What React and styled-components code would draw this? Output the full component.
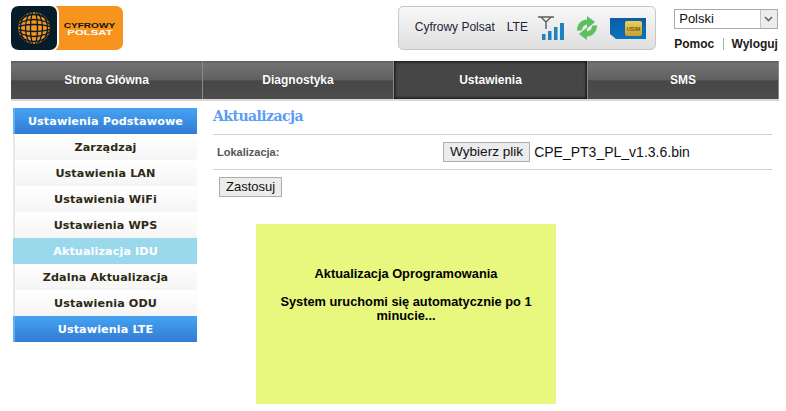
import styled, { createGlobalStyle } from "styled-components";

const GlobalStyle = createGlobalStyle`
  html, body { margin: 0; padding: 0; background: #fff; overflow: hidden; }
  body { font-family: "Liberation Sans", Arial, sans-serif; }
`;

const Page = styled.div`
  width: 786px;
  height: 411px;
  overflow: hidden;
`;
const Header = styled.header`
  display: flex;
  height: 61px;
  padding: 6px 8px 0 11px;
  box-sizing: border-box;
`;
const LogoBox = styled.div`
  display: flex;
  width: 112px;
  height: 44px;
  background: #f7941e;
  border-radius: 7px;
  overflow: hidden;
`;
const LogoGlobe = styled.div`
  width: 46px;
  height: 44px;
  background: #071c29;
  border-radius: 7px;
  box-shadow: 1px 0 0 1px #fff;
  display: flex;
  align-items: center;
  justify-content: center;
`;
const LogoWords = styled.div`
  flex: 1;
  display: flex;
  flex-direction: column;
  align-items: center;
  padding-top: 16px;
  box-sizing: border-box;
`;
const LogoTop = styled.span`
  color: #14130f;
  font: 900 8px/8px "Liberation Sans", Arial, sans-serif;
  transform: scaleX(1.26);
`;
const LogoBottom = styled.span`
  color: #fff;
  font: 900 6.5px/6px "Liberation Sans", Arial, sans-serif;
  transform: scaleX(1.75);
`;
const StatusBox = styled.div`
  margin-left: 275px;
  width: 259px;
  height: 44px;
  box-sizing: border-box;
  border: 1px solid #c8c8c8;
  border-radius: 5px;
  background: linear-gradient(#f8f8f8, #dfdfdf);
  display: flex;
  align-items: center;
  padding-left: 16px;
  font-size: 12px;
  color: #222238;
`;
const StatusText = styled.span`
  margin-right: ${(p) => p.$gap}px;
  position: relative;
  top: -1px;
`;
const IconSlot = styled.span`
  display: flex;
  margin-right: ${(p) => p.$gap}px;
`;
const HeaderRight = styled.div`
  margin-left: 18px;
  width: 104px;
  padding-top: 3px;
`;
const LangSelect = styled.div`
  height: 20px;
  box-sizing: border-box;
  border: 1px solid #a9a9a9;
  display: flex;
  justify-content: space-between;
  font-size: 13px;
  line-height: 18px;
  padding-left: 4px;
  color: #111;
`;
const LangArrow = styled.span`
  width: 16px;
  background: #ececec;
  border-left: 1px solid #c4c4c4;
  display: flex;
  align-items: center;
  justify-content: center;
`;
const Links = styled.div`
  display: flex;
  justify-content: space-between;
  margin-top: 8px;
  font-size: 12px;
  font-weight: bold;
  line-height: 14px;
  color: #1a1a1a;
`;
const LinkSep = styled.span`
  width: 1px;
  height: 12px;
  margin: 1px 0 0 1px;
  background: #9fb7a5;
`;
const Nav = styled.nav`
  display: flex;
  width: 768px;
  height: 40px;
  margin-left: 11px;
  box-sizing: border-box;
  border-bottom: 2px solid #d8d8d8;
`;
const NavItem = styled.div`
  flex: ${(p) => p.$w} 0 0;
  display: flex;
  align-items: center;
  justify-content: center;
  font-size: 12px;
  font-weight: bold;
  color: #fff;
  box-sizing: border-box;
  border-right: 1px solid #8a8a8a;
  text-shadow: 0 0 1px rgba(0, 0, 0, 0.4);
  background: ${(p) =>
    p.$active
      ? "#464646"
      : "linear-gradient(#5d5d5d 0, #727272 8%, #5f5f5f 50%, #474747 52%, #4d4d4d 100%)"};
  box-shadow: ${(p) => (p.$active ? "inset 0 0 3px 1px #111" : "none")};
`;
const Main = styled.div`
  display: flex;
  padding: 7px 14px 0 13px;
`;
const Sidebar = styled.aside`
  width: 184px;
  flex: none;
  align-self: flex-start;
`;
const MenuItem = styled.div`
  height: 26px;
  padding-right: 1px;
  text-align: center;
  font: bold 11.2px/27px "DejaVu Sans", Verdana, sans-serif;
  letter-spacing: 0.1px;
  color: ${(p) => (p.$kind === "plain" ? "#2e2a14" : "#fff")};
  box-sizing: border-box;
  border-left: 2px solid ${(p) => (p.$kind === "current" ? "#9ad9ec" : p.$kind === "group" ? "#62b0f2" : "#e8e8e8")};
  background: ${(p) =>
    p.$kind === "group"
      ? "linear-gradient(#46a3f2, #317bd4)"
      : p.$kind === "current"
        ? "#9ad9ec"
        : "linear-gradient(#fff, #f5f5f5)"};
`;
const Content = styled.section`
  margin-left: 16px;
  width: 559px;
`;
const Title = styled.h1`
  margin: 0;
  height: 27px;
  box-sizing: border-box;
  border-bottom: 1px solid #d0d0d0;
  font: bold 14px/17px "DejaVu Serif", Georgia, serif;
  letter-spacing: -0.55px;
  color: #5b9cf5;
`;
const FormRow = styled.div`
  display: flex;
  align-items: center;
  height: 35px;
  box-sizing: border-box;
  border-bottom: 1px solid #d0d0d0;
  padding-left: 4px;
`;
const FieldLabel = styled.label`
  width: 226px;
  font-size: 11px;
  font-weight: bold;
  color: #555;
`;
const PlainButton = styled.button`
  height: 20px;
  padding: 0 6px;
  border: 1px solid #adadad;
  background: #ececec;
  border-radius: 0;
  font: ${(p) => p.$size}px/18px "Liberation Sans", Arial, sans-serif;
  color: #111;
`;
const FileName = styled.span`
  margin-left: 4px;
  font-size: 14px;
  color: #111;
`;
const ApplyRow = styled.div`
  display: flex;
  padding: 7px 0 0 6px;
`;
const Notice = styled.div`
  width: 300px;
  height: 180px;
  margin: 27px 0 0 43px;
  padding: 43px 20px 0;
  box-sizing: border-box;
  background: #e8f87f;
  text-align: center;
  font-size: 12.8px;
  font-weight: bold;
  line-height: 14px;
  color: #000;
`;
const NoticeLine = styled.p`
  margin: 0 0 14px;
`;

const Globe = () => (
  <svg width="38" height="38" viewBox="0 0 38 38">
    <defs>
      <clipPath id="ball">
        <circle cx="19" cy="19" r="16" />
      </clipPath>
    </defs>
    <circle cx="19" cy="19" r="16" fill="#f7941e" />
    <g clipPath="url(#ball)" fill="none" stroke="#071c29" strokeWidth="1.3">
      <ellipse cx="19" cy="19" rx="3.5" ry="17" />
      <ellipse cx="19" cy="19" rx="8.5" ry="17" />
      <ellipse cx="19" cy="19" rx="13.5" ry="17" />
      <ellipse cx="19" cy="19" rx="17" ry="3.5" />
      <ellipse cx="19" cy="19" rx="17" ry="8.5" />
      <ellipse cx="19" cy="19" rx="17" ry="13.5" />
    </g>
  </svg>
);

const SignalIcon = () => (
  <svg width="28" height="25" viewBox="0 0 28 25">
    <path d="M0 1h16M3 1l5 5 5-5M8 6v7" fill="none" stroke="#5d5d5d" strokeWidth="1.4" />
    <g fill="#1f82c0">
      <rect x="4" y="18" width="3.5" height="6" />
      <rect x="10" y="15" width="3.5" height="9" />
      <rect x="16" y="11" width="3.5" height="13" />
      <rect x="22" y="7" width="4" height="17" />
    </g>
  </svg>
);

const RefreshIcon = () => (
  <svg width="22" height="24" viewBox="0 0 22 24">
    <defs>
      <g id="arrowHalf">
        <path d="M3.5 14.5A8 8 0 0 1 11.5 6" fill="none" stroke="#5cbf60" strokeWidth="5" />
        <path d="M11 0l8 6-8 6.5Z" fill="#5cbf60" />
      </g>
    </defs>
    <use href="#arrowHalf" />
    <use href="#arrowHalf" transform="rotate(180 11 12)" />
  </svg>
);

const SimIcon = () => (
  <svg width="36" height="21" viewBox="0 0 36 21">
    <defs>
      <linearGradient id="simBlue" x1="0" y1="0" x2="0" y2="1">
        <stop offset="0" stopColor="#0a5da8" />
        <stop offset="1" stopColor="#0b74b8" />
      </linearGradient>
      <linearGradient id="chip" x1="0" y1="0" x2="0" y2="1">
        <stop offset="0" stopColor="#f0cf5a" />
        <stop offset="1" stopColor="#c9a032" />
      </linearGradient>
    </defs>
    <path d="M0 0h36v21H6l-6-5Z" fill="url(#simBlue)" />
    <rect x="15" y="3" width="17" height="15" rx="2" fill="url(#chip)" />
    <text x="23.5" y="12.5" textAnchor="middle" fontSize="5.5" fontWeight="bold" fontFamily="Liberation Sans" fill="#6a5a20">USIM</text>
  </svg>
);

const navItems = [
  { label: "Strona Główna", w: 192 },
  { label: "Diagnostyka", w: 191 },
  { label: "Ustawienia", w: 194, active: true },
  { label: "SMS", w: 191 },
];

const menuItems = [
  { label: "Ustawienia Podstawowe", kind: "group" },
  { label: "Zarządzaj", kind: "plain" },
  { label: "Ustawienia LAN", kind: "plain" },
  { label: "Ustawienia WiFi", kind: "plain" },
  { label: "Ustawienia WPS", kind: "plain" },
  { label: "Aktualizacja IDU", kind: "current" },
  { label: "Zdalna Aktualizacja", kind: "plain" },
  { label: "Ustawienia ODU", kind: "plain" },
  { label: "Ustawienia LTE", kind: "group" },
];

export default function App() {
  return (
    <Page>
      <GlobalStyle />
      <Header>
        <LogoBox>
          <LogoGlobe>
            <Globe />
          </LogoGlobe>
          <LogoWords>
            <LogoTop>CYFROWY</LogoTop>
            <LogoBottom>POLSAT</LogoBottom>
          </LogoWords>
        </LogoBox>
        <StatusBox>
          <StatusText $gap={12}>Cyfrowy Polsat</StatusText>
          <StatusText $gap={10}>LTE</StatusText>
          <IconSlot $gap={10}>
            <SignalIcon />
          </IconSlot>
          <IconSlot $gap={12}>
            <RefreshIcon />
          </IconSlot>
          <IconSlot $gap={0}>
            <SimIcon />
          </IconSlot>
        </StatusBox>
        <HeaderRight>
          <LangSelect>
            Polski
            <LangArrow>
              <svg width="9" height="6" viewBox="0 0 9 6">
                <path d="M1 1l3.5 3.5L8 1" fill="none" stroke="#5a6577" strokeWidth="1.6" />
              </svg>
            </LangArrow>
          </LangSelect>
          <Links>
            <span>Pomoc</span>
            <LinkSep />
            <span>Wyloguj</span>
          </Links>
        </HeaderRight>
      </Header>
      <Nav>
        {navItems.map((item) => (
          <NavItem key={item.label} $w={item.w} $active={item.active}>
            {item.label}
          </NavItem>
        ))}
      </Nav>
      <Main>
        <Sidebar>
          {menuItems.map((item) => (
            <MenuItem key={item.label} $kind={item.kind}>
              {item.label}
            </MenuItem>
          ))}
        </Sidebar>
        <Content>
          <Title>Aktualizacja</Title>
          <FormRow>
            <FieldLabel>Lokalizacja:</FieldLabel>
            <PlainButton $size={13.6}>Wybierz plik</PlainButton>
            <FileName>CPE_PT3_PL_v1.3.6.bin</FileName>
          </FormRow>
          <ApplyRow>
            <PlainButton $size={13}>Zastosuj</PlainButton>
          </ApplyRow>
          <Notice>
            <NoticeLine>Aktualizacja Oprogramowania</NoticeLine>
            <NoticeLine>System uruchomi się automatycznie po 1 minucie...</NoticeLine>
          </Notice>
        </Content>
      </Main>
    </Page>
  );
}
